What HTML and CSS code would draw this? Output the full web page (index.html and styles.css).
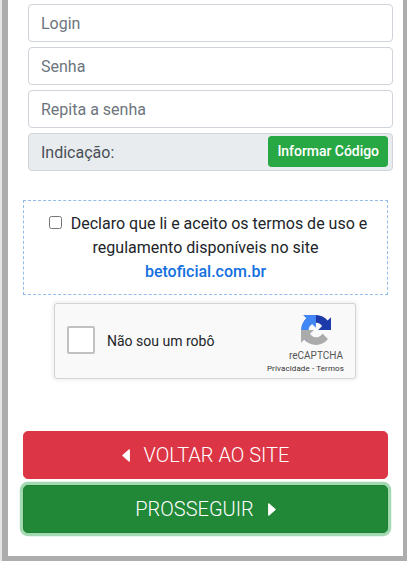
FILE: index.html
```html
<!DOCTYPE html>
<html lang="pt-br">

<head>
  <meta charset="utf-8">
  <title>Cadastro</title>
  <link rel="stylesheet" href="styles.css">
</head>

<body>
  <form class="cadastro" onsubmit="return false">
    <div class="campos">
      <input type="text" class="form-control" placeholder="Login">
      <input type="password" class="form-control" placeholder="Senha">
      <input type="password" class="form-control" placeholder="Repita a senha">
      <div class="form-control indicacao">
        <span>Indicação:</span>
        <button type="button" class="btn btn-sm btn-success">Informar Código</button>
      </div>
    </div>

    <div class="termos">
      <label><input type="checkbox" class="check-termos">Declaro que li e aceito os termos de uso e regulamento disponíveis no site <a href="#">betoficial.com.br</a></label>
    </div>

    <div class="captcha">
      <span class="captcha-check"></span>
      <span class="captcha-label">Não sou um robô</span>
      <div class="captcha-info">
        <svg class="captcha-logo" viewBox="0 0 64 64">
          <path fill="#1c3aa9" d="M64 31.955l-.033-1.37V4.687l-7.16 7.16C50.948 4.674 42.033.093 32.05.093c-10.4 0-19.622 4.96-25.458 12.64l11.736 11.86a15.55 15.55 0 0 1 4.754-5.334c2.05-1.6 4.952-2.906 8.968-2.906.485 0 .86.057 1.135.163 4.976.393 9.288 3.14 11.828 7.124l-8.307 8.307L64 31.953" />
          <path fill="#4285f4" d="M31.862.094l-1.37.033H4.594l7.16 7.16C4.58 13.147 0 22.06 0 32.046c0 10.4 4.96 19.622 12.64 25.458L24.5 45.768a15.55 15.55 0 0 1-5.334-4.754c-1.6-2.05-2.906-4.952-2.906-8.968 0-.485.057-.86.163-1.135.393-4.976 3.14-9.288 7.124-11.828l8.307 8.307L31.86.095" />
          <path fill="#ababab" d="M.001 32.045l.033 1.37v25.898l7.16-7.16c5.86 7.173 14.774 11.754 24.76 11.754 10.4 0 19.622-4.96 25.458-12.64l-11.736-11.86a15.55 15.55 0 0 1-4.754 5.334c-2.05 1.6-4.952 2.906-8.968 2.906-.485 0-.86-.057-1.135-.163-4.976-.393-9.288-3.14-11.828-7.124l8.307-8.307c-10.522.04-22.4.066-27.295-.005" />
        </svg>
        <span class="captcha-nome">reCAPTCHA</span>
        <span class="captcha-links">Privacidade - Termos</span>
      </div>
    </div>

    <div class="acoes">
      <button type="button" class="btn btn-lg btn-danger">
        <svg class="seta seta-esq" viewBox="0 0 8 13"><path d="M7.2 1v11L1 6.5z" /></svg>VOLTAR AO SITE
      </button>
      <button type="submit" class="btn btn-lg btn-prosseguir">
        PROSSEGUIR<svg class="seta seta-dir" viewBox="0 0 8 13"><path d="M.8 1v11L7 6.5z" /></svg>
      </button>
    </div>
  </form>
</body>

</html>
```

FILE: styles.css
```css
* {
  box-sizing: border-box;
}

body {
  margin: 0;
  height: 561px;
  padding: 0 4px 5px 6px;
  background-color: #adadad;
  border-left: 2px solid #e5e5e5;
  color: #212529;
  font-family: Roboto, "Liberation Sans", sans-serif;
  font-size: 16px;
  line-height: 1.5;
  overflow: hidden;
}

.cadastro {
  height: 556px;
  padding: 4px 15px 0;
  background-color: #fff;
}

/* --- Campos --- */
.campos {
  display: flex;
  flex-direction: column;
  gap: 5px;
  margin: 0 -5px 29px 5px;
}

.form-control {
  width: 100%;
  height: 38px;
  padding: 6px 12px;
  border: 1px solid #ced4da;
  border-radius: 4px;
  background-color: #fff;
  color: #495057;
  font-family: inherit;
  font-size: 16px;
  line-height: 1.5;
}

.form-control::placeholder {
  color: #6c757d;
  opacity: 1;
}

.indicacao {
  display: flex;
  align-items: center;
  justify-content: space-between;
  padding: 1px 4px 0 12px;
  background-color: #e9ecef;
}

/* --- Botões --- */
.btn {
  border: 1px solid transparent;
  border-radius: 4px;
  color: #fff;
  font-family: inherit;
  font-weight: 400;
  cursor: pointer;
}

.btn-sm {
  height: 31px;
  margin-bottom: 2px;
  padding: 4px 8px;
  border-radius: 3.2px;
  font-size: 14px;
  font-weight: 500;
  letter-spacing: -0.04px;
  line-height: 1.5;
}

.btn-success {
  background-color: #28a745;
  border-color: #28a745;
}

.btn-lg {
  display: flex;
  align-items: center;
  justify-content: center;
  width: 100%;
  height: 48px;
  padding: 8px 16px;
  border-radius: 4.8px;
  font-size: 20px;
  font-weight: 300;
  line-height: 1.5;
}

.btn-danger {
  background-color: #dc3545;
  border-color: #dc3545;
}

.btn-prosseguir {
  background-color: #218838;
  border-color: #1e7e34;
  box-shadow: 0 0 0 3.2px rgba(72, 180, 97, 0.5);
}

.seta {
  width: 8px;
  height: 13px;
  fill: #fff;
  stroke: #fff;
  stroke-width: 1.4;
  stroke-linejoin: round;
}

.seta-esq {
  margin-right: 14px;
}

.seta-dir {
  margin-left: 14px;
}

/* --- Termos --- */
.termos {
  height: 95px;
  padding: 11px 15px 10px;
  border: 1px dashed #93bce9;
  text-align: center;
}

.check-termos {
  width: 13px;
  height: 13px;
  margin: 0 9px 0 5px;
}

.termos a {
  color: #136fe0;
  font-weight: 500;
  text-decoration: none;
}

/* --- Captcha --- */
.captcha {
  display: flex;
  align-items: center;
  width: 302px;
  height: 76px;
  margin: 8px 0 52px 31px;
  padding: 0 11px 0 12px;
  border: 1px solid #d3d3d3;
  border-radius: 3px;
  background-color: #f9f9f9;
  box-shadow: 0 0 4px 1px rgba(0, 0, 0, 0.08);
}

.captcha-check {
  width: 28px;
  height: 28px;
  margin-top: -2px;
  border: 2px solid #c1c1c1;
  border-radius: 2px;
  background-color: #fff;
}

.captcha-label {
  margin-left: 12px;
  font-size: 14px;
}

.captcha-info {
  display: flex;
  flex-direction: column;
  align-items: flex-end;
  align-self: flex-start;
  margin: 11px 0 0 auto;
  color: #555;
}

.captcha-logo {
  width: 30px;
  height: 30px;
  margin-right: 13px;
}

.captcha-nome {
  margin: 5px 1px 0 0;
  font-size: 10px;
  line-height: 12px;
}

.captcha-links {
  color: #333;
  font-size: 8px;
  letter-spacing: 0.12px;
  line-height: 13px;
}

.acoes {
  display: flex;
  flex-direction: column;
  gap: 6px;
}
```
